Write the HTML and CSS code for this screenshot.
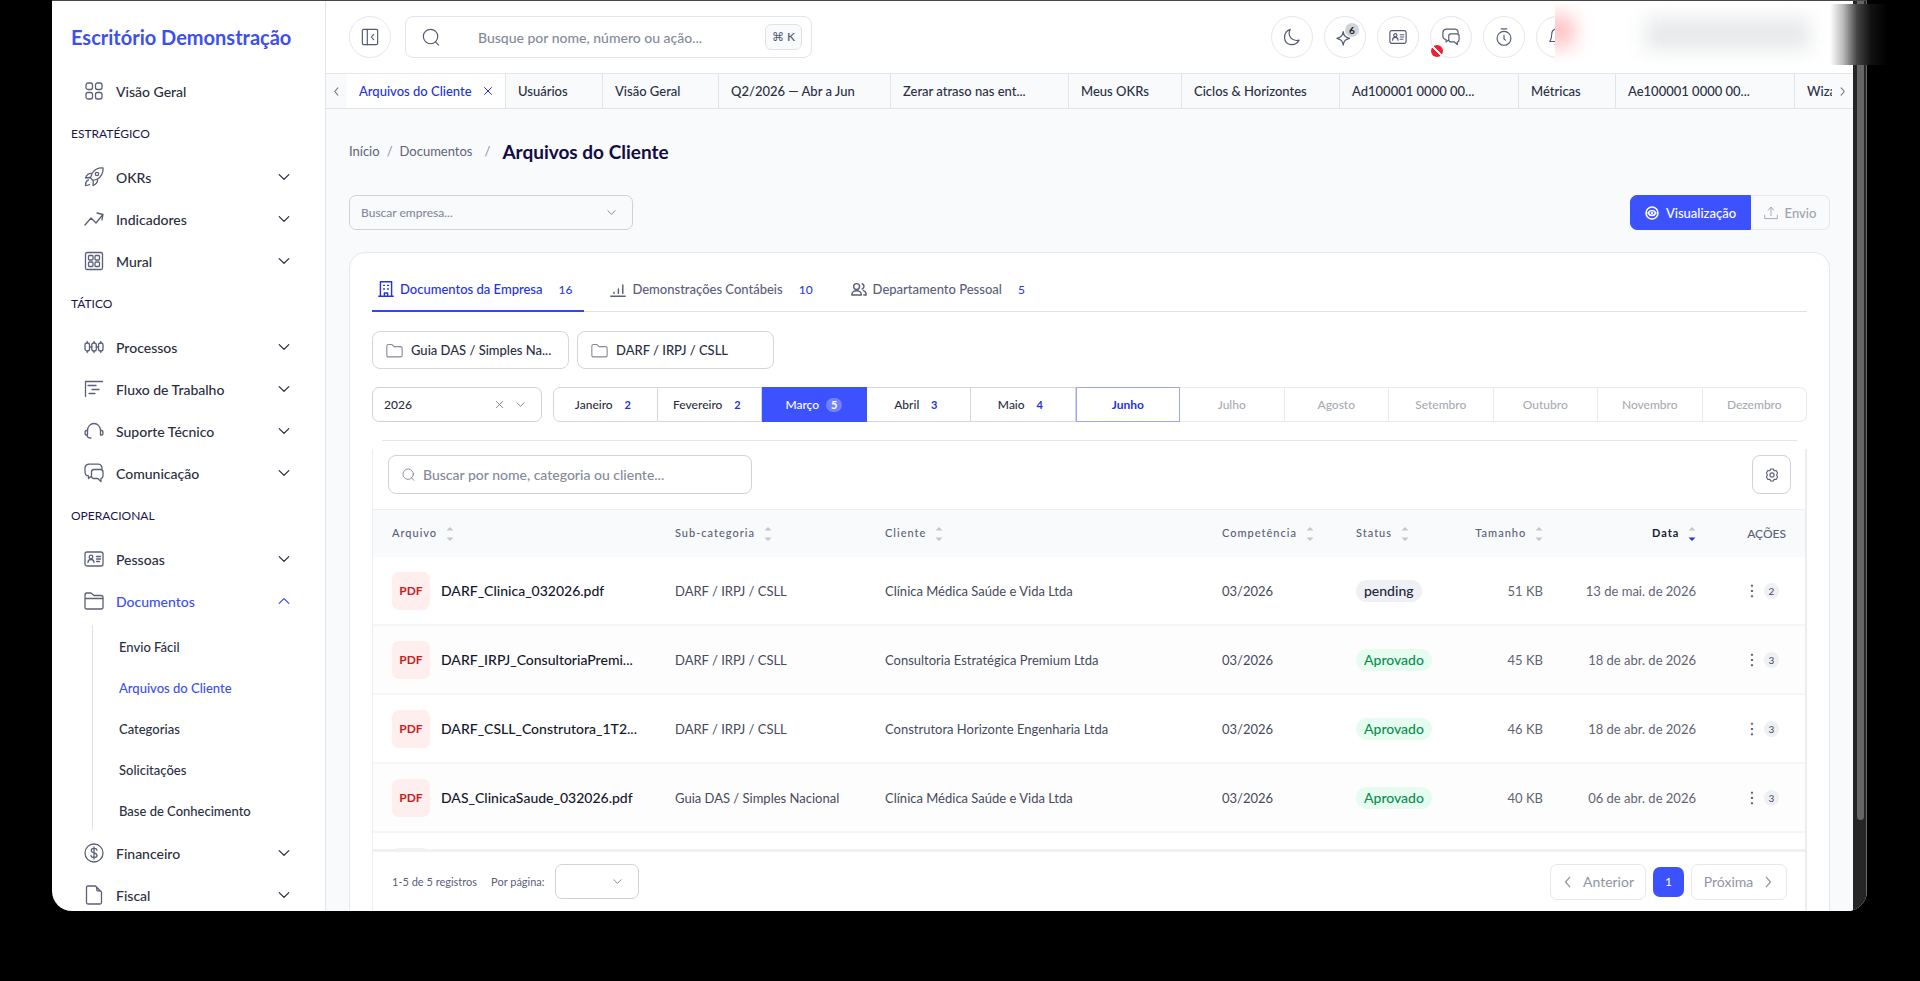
FILE: index.html
```html
<!DOCTYPE html>
<html lang="pt-BR">
<head>
    <meta charset="UTF-8">
    <meta name="viewport" content="width=device-width, initial-scale=1.0">
    <title>Arquivos do Cliente - Escritório Demonstração</title>
    <link rel="stylesheet" href="styles.css">
</head>
<body>

    <!-- icon set -->
    <svg class="icon-defs" aria-hidden="true">
        <symbol id="i-grid" viewBox="0 0 20 20"><rect x="2" y="2" width="6.5" height="6.5" rx="2"/><rect x="11.500" y="2" width="6.5" height="6.5" rx="2"/><rect x="2" y="11.500" width="6.5" height="6.5" rx="2"/><rect x="11.500" y="11.500" width="6.5" height="6.5" rx="2"/></symbol>
        <symbol id="i-rocket" viewBox="0 0 20 20"><path d="M19 1c-5-.3-8.500 1.500-11 5.500L6.500 11 9 13.500l4.500-1.500C17.500 9.500 19.300 6 19 1zM8 6.500c-3-.5-5 .8-6.500 4.500l4.500-.5M13.500 12c.5 3-.8 5-4.500 6.500l.3-5M4.500 13c-2 .5-3 2.500-3 5.500 1.500 0 3-.3 4-1"/><circle cx="13" cy="7" r="1.700"/></symbol>
        <symbol id="i-trend" viewBox="0 0 20 20"><path d="M1 16l6-7 5 5 6.500-8M13 4l6 1.500L18 11"/></symbol>
        <symbol id="i-board" viewBox="0 0 20 20"><rect x="1.500" y="1.500" width="17" height="17" rx="1.500"/><rect x="4.500" y="4.500" width="4.500" height="4.500" rx="1"/><rect x="11" y="4.500" width="4.500" height="4.500" rx="1"/><rect x="4.500" y="11" width="4.500" height="4.500" rx="1"/><rect x="11" y="11" width="4.500" height="4.500" rx="1"/></symbol>
        <symbol id="i-process" viewBox="0 0 20 20"><rect x="1" y="6" width="4.500" height="8" rx="2"/><rect x="7.800" y="6" width="4.500" height="8" rx="2"/><rect x="14.500" y="6" width="4.500" height="8" rx="2"/><path d="M3.200 4.500V6M3.200 14v1.500M10 4.500V6M10 14v1.500M16.800 4.500V6M16.800 14v1.500M5.500 10h2.300M12.300 10h2.200"/></symbol>
        <symbol id="i-flow" viewBox="0 0 20 20"><path d="M18.500 2.500h-17v15M4 6.500h8M8 10.500h7M5 14.500h6"/></symbol>
        <symbol id="i-headset" viewBox="0 0 20 20"><path d="M3.500 10C3.500 0 16.500 0 16.500 10M3.500 9.500H2.300C.6 9.500.6 14 2.300 14h1.200zM16.500 9.500h1.200c1.700 0 1.700 4.500 0 4.500h-1.200zM3 14c0 2 1 3 4 3"/></symbol>
        <symbol id="i-chat" viewBox="0 0 20 20"><path d="M7 13.500l-2.500 2v-2.700C2 12.800 1.300 12 1 9.500V5C1.300 2.500 2 1.500 4.500 1.200h10C17 1.500 18 2.500 18 5.500M10 6.500h6.500c2 0 2.500 1 2.500 2.500v4c0 1.500-.5 2.200-2 2.500v3l-3.200-3H10c-2 0-2.500-1-2.500-2.500V9c0-1.500.5-2.500 2.500-2.500z"/></symbol>
        <symbol id="i-card" viewBox="0 0 20 20"><rect x="1" y="3" width="18" height="14" rx="2"/><circle cx="7" cy="8" r="1.800"/><path d="M4 13.500c0-4 6-4 6 0M12.500 7.500h4M12.500 10h4M12.500 12.500h3"/></symbol>
        <symbol id="i-folder" viewBox="0 0 20 20"><path d="M1 16V4.500C1 2.500 1.500 2 3 2h4l3 2.500h7c1.500 0 2 .5 2 2V16c0 1.500-.5 2-2 2H3c-1.500 0-2-.5-2-2zM1 7.500h18"/></symbol>
        <symbol id="i-folder2" viewBox="0 0 20 20"><path d="M1 15.500V5c0-1.500.5-2 2-2h4l2.500 2.500H17c1.500 0 2 .5 2 2v8c0 1.500-.5 2-2 2H3c-1.500 0-2-.5-2-2z"/></symbol>
        <symbol id="i-coin" viewBox="0 0 20 20"><circle cx="10" cy="10" r="9"/><path d="M13 7.200C12.500 4.500 7.200 4.800 7.200 7.500c0 3 5.800 1.800 5.800 5 0 2.700-5.700 2.800-6 0M10 4v12"/></symbol>
        <symbol id="i-file" viewBox="0 0 20 20"><path d="M11.500 1H4C3 1 2.500 1.500 2.500 2.500v15c0 1 .5 1.500 1.500 1.500h12c1 0 1.500-.5 1.500-1.500V7zM11.500 1c2 1.500 1 3.500 1.500 4.500 1 .8 3.500 0 4.500 1.500"/></symbol>
        <symbol id="i-down" viewBox="0 0 20 20"><path d="M2 6l8 8 8-8"/></symbol>
        <symbol id="i-up" viewBox="0 0 20 20"><path d="M2 14l8-8 8 8"/></symbol>
        <symbol id="i-left" viewBox="0 0 20 20"><path d="M13 2l-7 8 7 8"/></symbol>
        <symbol id="i-right" viewBox="0 0 20 20"><path d="M7 2l7 8-7 8"/></symbol>
        <symbol id="i-x" viewBox="0 0 20 20"><path d="M3 3l14 14M17 3L3 17"/></symbol>
        <symbol id="i-search" viewBox="0 0 20 20"><circle cx="9.500" cy="9.500" r="8"/><path d="M15 15.500l3.500 3.500"/></symbol>
        <symbol id="i-panel" viewBox="0 0 20 20"><rect x="1.500" y="1.500" width="17" height="17" rx="1.500"/><path d="M7 1.500v17M14 7l-2.500 3 2.500 3"/></symbol>
        <symbol id="i-moon" viewBox="0 0 20 20"><path d="M8 1.500C-1 5 0 17.500 9 18.500c4 .3 7-1.500 9-5C10 15.500 4.500 9 8 1.500z"/></symbol>
        <symbol id="i-spark" viewBox="0 0 20 20"><path d="M8 4c.7 4.500 2 6 7 7.500-5 1.300-6.300 3-7 7.500-.7-4.500-2-6.200-7-7.500 5-1.500 6.300-3 7-7.500z"/></symbol>
        <symbol id="i-timer" viewBox="0 0 20 20"><circle cx="10" cy="11.500" r="7.700"/><path d="M7 1h6M10 8v4l1.500 1.500"/></symbol>
        <symbol id="i-bell" viewBox="0 0 20 20"><path d="M10 1c-5 0-6 4-6 7 0 4-1 5-2 7h16c-1-2-2-3-2-7 0-3-1-7-6-7zM8 18.500h4"/></symbol>
        <symbol id="i-eye" viewBox="0 0 20 20"><circle cx="10" cy="10" r="8.500"/><path d="M4.500 10c2.500-4.700 8.500-4.700 11 0-2.500 4.700-8.500 4.700-11 0z"/><circle cx="10" cy="10" r=".7"/></symbol>
        <symbol id="i-upload" viewBox="0 0 20 20"><path d="M10 14V2M6 6l4-4.500L14 6M1 13v5h18v-5"/></symbol>
        <symbol id="i-building" viewBox="0 0 20 20"><path d="M3 19V1h14v18M1 19h18M8 19v-4h4v4M7 5.500h1M12 5.500h1M7 10h1M12 10h1"/></symbol>
        <symbol id="i-bars" viewBox="0 0 20 20"><path d="M1 19h18M5 15.500V14M10.500 15.500V10M16 15.500V5"/></symbol>
        <symbol id="i-people" viewBox="0 0 20 20"><circle cx="7" cy="7" r="3.700"/><path d="M1 17.500c0-7 12-7 12 0zM14 3.500c3 1 3 5 0 6.500M15.500 12c3 1 3.500 3 3.500 5.500h-3"/></symbol>
        <symbol id="i-gear" viewBox="0 0 20 20"><path d="M8 1.500h4l1 2.500 3-.3 2 3.500L16.500 10l1.500 2.800-2 3.500-3-.3-1 2.500H8L7 16l-3 .3-2-3.500L3.500 10 2 7.200l2-3.500L7 4z"/><circle cx="10" cy="10" r="3"/></symbol>
        <symbol id="i-sort" viewBox="0 0 8 16"><path d="M0 4l4-4 4 4z"/><path class="sort-down" d="M0 12l4 4 4-4z"/></symbol>
    </svg>

    <div class="window">
        <aside class="sidebar">
            <h2 class="brand">Escritório Demonstração</h2>
            <nav>
                <a class="nav-item" href="#"><svg><use href="#i-grid"/></svg><span>Visão Geral</span></a>

                <h3 class="nav-title">ESTRATÉGICO</h3>
                <a class="nav-item" href="#"><svg><use href="#i-rocket"/></svg><span>OKRs</span><svg class="caret"><use href="#i-down"/></svg></a>
                <a class="nav-item" href="#"><svg><use href="#i-trend"/></svg><span>Indicadores</span><svg class="caret"><use href="#i-down"/></svg></a>
                <a class="nav-item" href="#"><svg><use href="#i-board"/></svg><span>Mural</span><svg class="caret"><use href="#i-down"/></svg></a>

                <h3 class="nav-title">TÁTICO</h3>
                <a class="nav-item" href="#"><svg><use href="#i-process"/></svg><span>Processos</span><svg class="caret"><use href="#i-down"/></svg></a>
                <a class="nav-item" href="#"><svg><use href="#i-flow"/></svg><span>Fluxo de Trabalho</span><svg class="caret"><use href="#i-down"/></svg></a>
                <a class="nav-item" href="#"><svg><use href="#i-headset"/></svg><span>Suporte Técnico</span><svg class="caret"><use href="#i-down"/></svg></a>
                <a class="nav-item" href="#"><svg><use href="#i-chat"/></svg><span>Comunicação</span><svg class="caret"><use href="#i-down"/></svg></a>

                <h3 class="nav-title">OPERACIONAL</h3>
                <a class="nav-item" href="#"><svg><use href="#i-card"/></svg><span>Pessoas</span><svg class="caret"><use href="#i-down"/></svg></a>
                <a class="nav-item open" href="#"><svg><use href="#i-folder"/></svg><span>Documentos</span><svg class="caret"><use href="#i-up"/></svg></a>
                <div class="subnav">
                    <a href="#">Envio Fácil</a>
                    <a href="#" class="active">Arquivos do Cliente</a>
                    <a href="#">Categorias</a>
                    <a href="#">Solicitações</a>
                    <a href="#">Base de Conhecimento</a>
                </div>
                <a class="nav-item" href="#"><svg><use href="#i-coin"/></svg><span>Financeiro</span><svg class="caret"><use href="#i-down"/></svg></a>
                <a class="nav-item" href="#"><svg><use href="#i-file"/></svg><span>Fiscal</span><svg class="caret"><use href="#i-down"/></svg></a>
            </nav>
        </aside>

        <div class="content">
            <header class="topbar">
                <button class="round-btn" aria-label="Recolher menu"><svg><use href="#i-panel"/></svg></button>
                <label class="search-box">
                    <svg><use href="#i-search"/></svg>
                    <input type="text" placeholder="Busque por nome, número ou ação..." aria-label="Busca">
                    <kbd>⌘ K</kbd>
                </label>
                <div class="top-actions">
                    <button class="round-btn" aria-label="Tema"><svg><use href="#i-moon"/></svg></button>
                    <button class="round-btn" aria-label="Novidades"><svg><use href="#i-spark"/></svg><span class="bubble">6</span></button>
                    <button class="round-btn" aria-label="Contatos"><svg><use href="#i-card"/></svg></button>
                    <button class="round-btn" aria-label="Conversas"><svg><use href="#i-chat"/></svg><span class="blocked"></span></button>
                    <button class="round-btn" aria-label="Cronômetro"><svg><use href="#i-timer"/></svg></button>
                    <button class="round-btn" aria-label="Notificações"><svg><use href="#i-bell"/></svg></button>
                </div>
            </header>

            <div class="tabbar">
                <button class="tab-arrow" aria-label="Anterior"><svg><use href="#i-left"/></svg></button>
                <div class="tabs">
                    <a href="#" class="active">Arquivos do Cliente <svg><use href="#i-x"/></svg></a>
                    <a href="#">Usuários</a>
                    <a href="#">Visão Geral</a>
                    <a href="#">Q2/2026 — Abr a Jun</a>
                    <a href="#">Zerar atraso nas ent...</a>
                    <a href="#">Meus OKRs</a>
                    <a href="#">Ciclos &amp; Horizontes</a>
                    <a href="#">Ad100001 0000 00...</a>
                    <a href="#">Métricas</a>
                    <a href="#">Ae100001 0000 00...</a>
                    <a href="#">Wiza</a>
                </div>
                <button class="tab-arrow" aria-label="Próximo"><svg><use href="#i-right"/></svg></button>
            </div>

            <main>
                <div class="breadcrumb">
                    <a href="#">Início</a><i>/</i><a href="#">Documentos</a><i class="wide">/</i>
                    <h1>Arquivos do Cliente</h1>
                </div>

                <div class="toolbar">
                    <div class="select company">
                        <select aria-label="Empresa"><option>Buscar empresa...</option></select>
                        <svg><use href="#i-down"/></svg>
                    </div>
                    <div class="mode">
                        <button class="mode-on"><svg><use href="#i-eye"/></svg>Visualização</button>
                        <button class="mode-off"><svg><use href="#i-upload"/></svg>Envio</button>
                    </div>
                </div>

                <section class="card">
                    <div class="doc-tabs">
                        <a href="#" class="active"><svg><use href="#i-building"/></svg>Documentos da Empresa <b>16</b></a>
                        <a href="#"><svg><use href="#i-bars"/></svg>Demonstrações Contábeis <b>10</b></a>
                        <a href="#"><svg><use href="#i-people"/></svg>Departamento Pessoal <b>5</b></a>
                    </div>

                    <div class="folders">
                        <button><svg><use href="#i-folder2"/></svg><span>Guia DAS / Simples Na...</span></button>
                        <button><svg><use href="#i-folder2"/></svg><span>DARF / IRPJ / CSLL</span></button>
                    </div>

                    <div class="period">
                        <div class="select year">
                            <select aria-label="Ano"><option>2026</option></select>
                            <svg class="clear"><use href="#i-x"/></svg>
                            <svg><use href="#i-down"/></svg>
                        </div>
                        <div class="months">
                            <button>Janeiro <b>2</b></button>
                            <button>Fevereiro <b>2</b></button>
                            <button class="selected">Março <b>5</b></button>
                            <button>Abril <b>3</b></button>
                            <button>Maio <b>4</b></button>
                            <button class="current">Junho</button>
                            <button disabled>Julho</button>
                            <button disabled>Agosto</button>
                            <button disabled>Setembro</button>
                            <button disabled>Outubro</button>
                            <button disabled>Novembro</button>
                            <button disabled>Dezembro</button>
                        </div>
                    </div>

                    <hr class="panel-line">
                    <div class="panel">
                        <div class="panel-tools">
                            <label class="filter">
                                <svg><use href="#i-search"/></svg>
                                <input type="text" placeholder="Buscar por nome, categoria ou cliente..." aria-label="Filtrar arquivos">
                            </label>
                            <button class="gear" aria-label="Configurar"><svg><use href="#i-gear"/></svg></button>
                        </div>

                        <div class="table-scroll">
                            <table>
                                <colgroup>
                                    <col class="c-file"><col class="c-sub"><col><col class="c-comp"><col class="c-status"><col class="c-size"><col class="c-date"><col class="c-act">
                                </colgroup>
                                <thead>
                                    <tr>
                                        <th>Arquivo <svg><use href="#i-sort"/></svg></th>
                                        <th>Sub-categoria <svg><use href="#i-sort"/></svg></th>
                                        <th>Cliente <svg><use href="#i-sort"/></svg></th>
                                        <th>Competência <svg><use href="#i-sort"/></svg></th>
                                        <th>Status <svg><use href="#i-sort"/></svg></th>
                                        <th class="right">Tamanho <svg><use href="#i-sort"/></svg></th>
                                        <th class="right sorted">Data <svg><use href="#i-sort"/></svg></th>
                                        <th class="act">AÇÕES</th>
                                    </tr>
                                </thead>
                                <tbody>
                                    <tr>
                                        <td><div class="file"><span class="pdf">PDF</span>DARF_Clinica_032026.pdf</div></td>
                                        <td>DARF / IRPJ / CSLL</td>
                                        <td>Clínica Médica Saúde e Vida Ltda</td>
                                        <td>03/2026</td>
                                        <td><span class="pill">pending</span></td>
                                        <td class="right">51 KB</td>
                                        <td class="right">13 de mai. de 2026</td>
                                        <td><div class="row-menu"><button aria-label="Ações">⋮</button><span>2</span></div></td>
                                    </tr>
                                    <tr>
                                        <td><div class="file"><span class="pdf">PDF</span>DARF_IRPJ_ConsultoriaPremi...</div></td>
                                        <td>DARF / IRPJ / CSLL</td>
                                        <td>Consultoria Estratégica Premium Ltda</td>
                                        <td>03/2026</td>
                                        <td><span class="pill ok">Aprovado</span></td>
                                        <td class="right">45 KB</td>
                                        <td class="right">18 de abr. de 2026</td>
                                        <td><div class="row-menu"><button aria-label="Ações">⋮</button><span>3</span></div></td>
                                    </tr>
                                    <tr>
                                        <td><div class="file"><span class="pdf">PDF</span>DARF_CSLL_Construtora_1T2...</div></td>
                                        <td>DARF / IRPJ / CSLL</td>
                                        <td>Construtora Horizonte Engenharia Ltda</td>
                                        <td>03/2026</td>
                                        <td><span class="pill ok">Aprovado</span></td>
                                        <td class="right">46 KB</td>
                                        <td class="right">18 de abr. de 2026</td>
                                        <td><div class="row-menu"><button aria-label="Ações">⋮</button><span>3</span></div></td>
                                    </tr>
                                    <tr>
                                        <td><div class="file"><span class="pdf">PDF</span>DAS_ClinicaSaude_032026.pdf</div></td>
                                        <td>Guia DAS / Simples Nacional</td>
                                        <td>Clínica Médica Saúde e Vida Ltda</td>
                                        <td>03/2026</td>
                                        <td><span class="pill ok">Aprovado</span></td>
                                        <td class="right">40 KB</td>
                                        <td class="right">06 de abr. de 2026</td>
                                        <td><div class="row-menu"><button aria-label="Ações">⋮</button><span>3</span></div></td>
                                    </tr>
                                    <tr>
                                        <td><div class="file"><span class="pdf"></span></div></td>
                                        <td></td><td></td><td></td><td></td><td></td><td></td><td></td>
                                    </tr>
                                </tbody>
                            </table>
                        </div>

                        <div class="pager">
                            <span>1-5 de 5 registros</span>
                            <label for="perPage">Por página:</label>
                            <div class="select per-page">
                                <select id="perPage"><option></option></select>
                                <svg><use href="#i-down"/></svg>
                            </div>
                            <div class="pages">
                                <button class="step"><svg><use href="#i-left"/></svg>Anterior</button>
                                <button class="page">1</button>
                                <button class="step">Próxima<svg><use href="#i-right"/></svg></button>
                            </div>
                        </div>
                    </div>
                </section>
            </main>
        </div>

        <div class="scrollbar"><div class="thumb"></div></div>
    </div>
    <div class="censor"></div>

</body>
</html>
```

FILE: styles.css
```css
* {
    box-sizing: border-box;
}

body {
    margin: 0;
    background: #000;
    color: #2b2f42;
    font-family: Lato, 'Open Sans', sans-serif;
    font-size: 14px;
    font-weight: 500;
    position: relative;
    overflow: hidden;
}

a {
    color: inherit;
    text-decoration: none;
}

button,
input,
select {
    font: inherit;
    color: inherit;
}

button {
    cursor: pointer;
    padding: 0;
    background: #fff;
    border: 1px solid #e5e7eb;
    display: flex;
    align-items: center;
    justify-content: center;
}

svg {
    width: 18px;
    height: 18px;
    flex: none;
    fill: none;
    stroke: currentColor;
    stroke-width: 1.3;
    stroke-linecap: round;
    stroke-linejoin: round;
}

.icon-defs {
    position: absolute;
    width: 0;
    height: 0;
}

.window {
    display: flex;
    height: calc(100vh - 70px);
    margin: 0 53px 70px 52px;
    background: #fff;
    border-top: 1px solid #47474b;
    border-radius: 0 0 20px 20px;
    overflow: hidden;
}

/* Sidebar */
.sidebar {
    width: 274px;
    flex: none;
    border-right: 1px solid #e2e4e9;
    overflow: hidden;
}

.brand {
    margin: 0;
    padding: 20px 0 0 19px;
    height: 69px;
    color: #3d4ff0;
    font-size: 20px;
    line-height: 32px;
    font-weight: 700;
}

.nav-item {
    display: flex;
    align-items: center;
    height: 42px;
    padding: 0 35px 0 32px;
    gap: 12px;
    color: #2a2e40;
}

.nav-item svg {
    width: 20px;
    height: 20px;
    color: #5b6078;
}

.nav-item .caret {
    width: 12px;
    height: 12px;
    margin-left: auto;
    color: #2a2e40;
    stroke-width: 2.1;
}

.nav-title {
    margin: 0;
    padding-left: 19px;
    font-size: 12px;
    line-height: 44px;
    font-weight: 400;
    color: #1b1648;
}

.nav-item.open,
.nav-item.open .caret,
.subnav .active {
    color: #3d4ff0;
}

.subnav {
    margin-left: 40px;
    padding: 5px 0 0 27px;
    background: linear-gradient(#dfe1e6, #dfe1e6) left center / 1px 205px no-repeat;
}

.subnav a {
    display: block;
    font-size: 13px;
    line-height: 41px;
}

/* Top bar */
.content {
    flex: 1;
    min-width: 0;
    display: flex;
    flex-direction: column;
    background: #f8fafc;
}

.topbar {
    display: flex;
    align-items: center;
    flex: none;
    height: 73px;
    padding: 0 23px;
    background: #fff;
    border-bottom: 1px solid #e5e7eb;
}

.round-btn {
    width: 42px;
    height: 42px;
    border-radius: 50%;
    color: #555a72;
    position: relative;
}

.search-box {
    display: flex;
    align-items: center;
    width: 407px;
    height: 42px;
    margin-left: 14px;
    padding: 0 9px 0 16px;
    border: 1px solid #e2e4e9;
    border-radius: 8px;
    color: #555a72;
}

.search-box input,
.filter input {
    flex: 1;
    min-width: 0;
    padding: 0;
    border: 0;
    outline: 0;
    background: none;
}

.search-box input {
    margin-left: 38px;
}

input::placeholder {
    color: #858a9b;
    opacity: 1;
}

kbd {
    width: 37px;
    line-height: 24px;
    border: 1px solid #dfe3e8;
    border-radius: 6px;
    background: #f8fafc;
    font-family: Lato, 'DejaVu Sans', sans-serif;
    font-size: 12px;
    text-align: center;
}

.top-actions {
    display: flex;
    gap: 11px;
    margin-left: auto;
    margin-right: 252px;
}

.bubble {
    position: absolute;
    top: 6px;
    right: 6px;
    width: 14px;
    border-radius: 7px;
    background: #cfd4dc;
    color: #222;
    font-size: 10px;
    line-height: 14px;
    font-weight: 700;
}

.blocked {
    position: absolute;
    left: 0;
    bottom: 0;
    width: 12px;
    height: 12px;
    border-radius: 50%;
    background: linear-gradient(45deg, #f02030 42%, #fff 42%, #fff 58%, #f02030 58%);
}

/* Open pages */
.tabbar {
    display: flex;
    flex: none;
    height: 35px;
    border-bottom: 1px solid #e2e4e9;
}

.tab-arrow {
    width: 21px;
    border: 0;
    background: none;
    color: #777;
}

.tab-arrow svg {
    width: 9px;
    height: 9px;
    stroke-width: 2.5;
}

.tabs {
    flex: 1;
    display: grid;
    grid-template-columns: 159px 97px 116px 172px 178px 113px 158px 179px 97px 179px 97px;
    overflow: hidden;
}

.tabs a {
    padding-left: 12px;
    font-size: 13px;
    line-height: 34px;
    white-space: nowrap;
    border-right: 1px solid #e2e4e9;
}

.tabs .active {
    display: flex;
    align-items: center;
    gap: 11px;
    background: #fff;
    color: #2433e0;
    border-bottom: 2px solid #3346e8;
}

.tabs svg {
    width: 10px;
    height: 10px;
    stroke-width: 2;
}

/* Page */
main {
    padding: 28px 23px 0;
}

.breadcrumb {
    display: flex;
    align-items: center;
    height: 28px;
    color: #5f6474;
    font-size: 13px;
    font-weight: 400;
}

.breadcrumb i {
    margin: 0 7px;
    font-style: normal;
    color: #8b8f9c;
}

.breadcrumb .wide {
    margin: 0 12px;
}

h1 {
    margin: 0;
    font-size: 19px;
    font-weight: 700;
    color: #120b45;
}

.toolbar {
    display: flex;
    justify-content: space-between;
    margin: 30px 0 22px;
}

.select {
    display: flex;
    align-items: center;
    position: relative;
    height: 35px;
    border: 1px solid #ced3da;
    border-radius: 7px;
    background: #fff;
    font-size: 12px;
}

.select select {
    appearance: none;
    width: 100%;
    height: 100%;
    padding: 0 11px;
    border: 0;
    background: none;
    outline: 0;
}

.select svg {
    position: absolute;
    right: 16px;
    width: 9px;
    height: 9px;
    color: #777c8c;
    stroke-width: 2;
}

.select .clear {
    right: 37px;
}

.company {
    width: 284px;
    background: none;
    color: #858a9b;
}

.mode {
    display: flex;
}

.mode button {
    height: 35px;
    gap: 7px;
    font-size: 13px;
}

.mode svg {
    width: 14px;
    height: 14px;
}

.mode-on {
    width: 121px;
    border-color: #3d52ff;
    border-radius: 7px 0 0 7px;
    background: #3d52ff;
    color: #fff;
}

.mode-on svg {
    stroke-width: 2.3;
}

.mode-off {
    width: 79px;
    border-left: 0;
    border-radius: 0 7px 7px 0;
    background: none;
    color: #a0a3ac;
}

.card {
    padding: 23px 22px;
    border: 1px solid #e5e7eb;
    border-radius: 16px;
    background: #fff;
    min-height: 900px;
}

.doc-tabs {
    display: flex;
    gap: 20px;
    border-bottom: 1px solid #dfe1e6;
}

.doc-tabs a {
    display: flex;
    align-items: center;
    height: 36px;
    padding: 0 12px 8px 6px;
    margin-bottom: -1px;
    gap: 6px;
    color: #5b6078;
    font-size: 13px;
    border-bottom: 2px solid transparent;
}

.doc-tabs svg {
    width: 16px;
    height: 16px;
    stroke-width: 1.8;
}

.doc-tabs b {
    margin-left: 10px;
    color: #2b41e5;
    font-size: 12px;
    font-weight: 500;
}

.doc-tabs .active {
    color: #2433e0;
    border-bottom-color: #3346e8;
}

.folders {
    display: flex;
    gap: 8px;
    margin: 19px 0 18px;
}

.folders button {
    justify-content: flex-start;
    width: 197px;
    height: 38px;
    padding-left: 13px;
    gap: 8px;
    border-color: #d3d6dc;
    border-radius: 8px;
    font-size: 13px;
    white-space: nowrap;
}

.folders svg {
    width: 17px;
    height: 17px;
    color: #858a9b;
}

.period {
    display: flex;
    gap: 11px;
}

.year {
    width: 170px;
}

.months {
    flex: 1;
    display: grid;
    grid-template-columns: repeat(12, 1fr);
}

.months button {
    gap: 7px;
    border-color: #d3d6dc;
    border-left-width: 0;
    font-size: 12px;
}

.months button:first-child {
    border-left-width: 1px;
    border-radius: 7px 0 0 7px;
}

.months button:last-child {
    border-radius: 0 7px 7px 0;
}

.months b {
    width: 16px;
    border-radius: 8px;
    color: #2433e0;
    font-size: 11px;
    line-height: 14px;
}

.months .selected {
    border-color: #3d52ff;
    background: #3d52ff;
    color: #fff;
}

.months .selected b {
    background: #7281ff;
    color: #fff;
}

.months .current {
    border: 1px solid #9aa5f5;
    color: #2433e0;
    font-weight: 700;
}

.months button:disabled {
    border-color: #e8eaed;
    color: #a9abb3;
}

/* Files panel */
.panel-line {
    height: 1px;
    margin: 18px 10px 8px;
    border: 0;
    background: #e2e4e9;
}

.panel {
    border: 1px solid #ebedf0;
    border-width: 0 2px 0 1px;
}

.panel-tools {
    display: flex;
    justify-content: space-between;
    padding: 6px 14px 15px 15px;
}

.filter {
    display: flex;
    align-items: center;
    gap: 8px;
    width: 364px;
    height: 39px;
    padding: 0 13px;
    border: 1px solid #ced3da;
    border-radius: 8px;
}

.filter svg {
    width: 13px;
    height: 13px;
    color: #777c8c;
}

.gear {
    width: 39px;
    height: 39px;
    border-color: #ced3da;
    border-radius: 8px;
    color: #5b6078;
}

.gear svg {
    width: 14px;
    height: 14px;
    stroke-width: 1.6;
}

.table-scroll {
    height: 343px;
    overflow: hidden;
    border-bottom: 3px solid #eff1f3;
}

table {
    width: 100%;
    table-layout: fixed;
    border-collapse: separate;
    border-spacing: 0;
}

.c-file {
    width: 283px;
}

.c-sub {
    width: 210px;
}

.c-comp {
    width: 134px;
}

.c-status {
    width: 114px;
}

.c-size {
    width: 111px;
}

.c-date {
    width: 153px;
}

.c-act {
    width: 90px;
}

th,
td {
    padding: 0 19px;
    text-align: left;
    white-space: nowrap;
}

th {
    height: 48px;
    border-top: 1px solid #edeff2;
    background: #f8fafb;
    color: #5b6078;
    font-size: 11px;
    font-weight: 500;
    letter-spacing: 1px;
}

th svg {
    width: 8px;
    height: 14px;
    margin-left: 5px;
    vertical-align: middle;
    stroke: none;
    fill: #c3c6cd;
}

.sort-down {
    fill: var(--sort-down, #c3c6cd);
}

th.sorted {
    --sort-down: #2433e0;
    color: #1d2033;
    font-weight: 700;
}

th.act {
    font-size: 12px;
    letter-spacing: 0;
    text-align: right;
}

td {
    height: 69px;
    border-bottom: 2px solid #f5f6f7;
    color: #454a5c;
    font-size: 13px;
    font-weight: 400;
}

tbody tr:nth-child(even) {
    background: #fdfdfd;
}

.right {
    text-align: right;
}

td.right {
    color: #5f6474;
}

.file {
    display: flex;
    align-items: center;
    gap: 11px;
    color: #14172a;
    font-size: 14px;
    font-weight: 500;
}

.pdf {
    width: 38px;
    height: 38px;
    border-radius: 7px;
    background: #feeeee;
    color: #c81e1e;
    font-size: 12px;
    line-height: 38px;
    font-weight: 700;
    text-align: center;
}

.pill {
    display: inline-block;
    padding: 0 8px;
    border-radius: 11px;
    background: #eef0f4;
    color: #22263a;
    font-size: 14px;
    line-height: 22px;
    font-weight: 500;
}

.pill.ok {
    background: #e6fcf0;
    color: #0a8f4e;
}

.row-menu {
    display: flex;
    align-items: center;
    justify-content: flex-end;
    gap: 7px;
    padding-right: 7px;
}

.row-menu button {
    width: 10px;
    border: 0;
    background: none;
    font-family: 'DejaVu Sans', sans-serif;
    font-size: 16px;
}

.row-menu span {
    width: 15px;
    border-radius: 8px;
    background: #eef0f3;
    font-size: 10px;
    line-height: 16px;
    text-align: center;
}

.pager {
    display: flex;
    align-items: center;
    height: 59px;
    padding: 0 18px 0 19px;
    color: #5b6078;
    font-size: 11px;
    font-weight: 400;
}

.pager label {
    margin: 0 10px 0 14px;
}

.per-page {
    width: 84px;
}

.pages {
    display: flex;
    align-items: center;
    gap: 7px;
    margin-left: auto;
    font-size: 14px;
}

.step {
    width: 96px;
    height: 36px;
    gap: 9px;
    border-radius: 7px;
    color: #9194a3;
}

.step svg {
    width: 12px;
    height: 12px;
    stroke-width: 2;
}

.page {
    width: 31px;
    height: 30px;
    border: 0;
    border-radius: 7px;
    background: #3d52ff;
    color: #fff;
    font-size: 12px;
}

/* Window scrollbar */
.scrollbar {
    width: 14px;
    flex: none;
    padding: 0 2px 0 4px;
    background: #262626;
    border-right: 1px solid #6a6a6a;
}

.thumb {
    height: 90%;
    border-radius: 0 0 4px 4px;
    background: #666;
}

/* Hidden user area over the window corner */
.censor {
    position: absolute;
    top: 4px;
    right: 32px;
    width: 333px;
    height: 61px;
    overflow: hidden;
    background: linear-gradient(to right, #fff 275px, #bbb 288px, #444 302px, #111 316px, #000);
}

.censor::before,
.censor::after {
    content: '';
    position: absolute;
    filter: blur(10px);
}

.censor::before {
    left: -10px;
    top: 12px;
    width: 28px;
    height: 30px;
    background: #ffb8ba;
}

.censor::after {
    left: 90px;
    top: 14px;
    width: 165px;
    height: 32px;
    background: #e6e8ea;
}
```
